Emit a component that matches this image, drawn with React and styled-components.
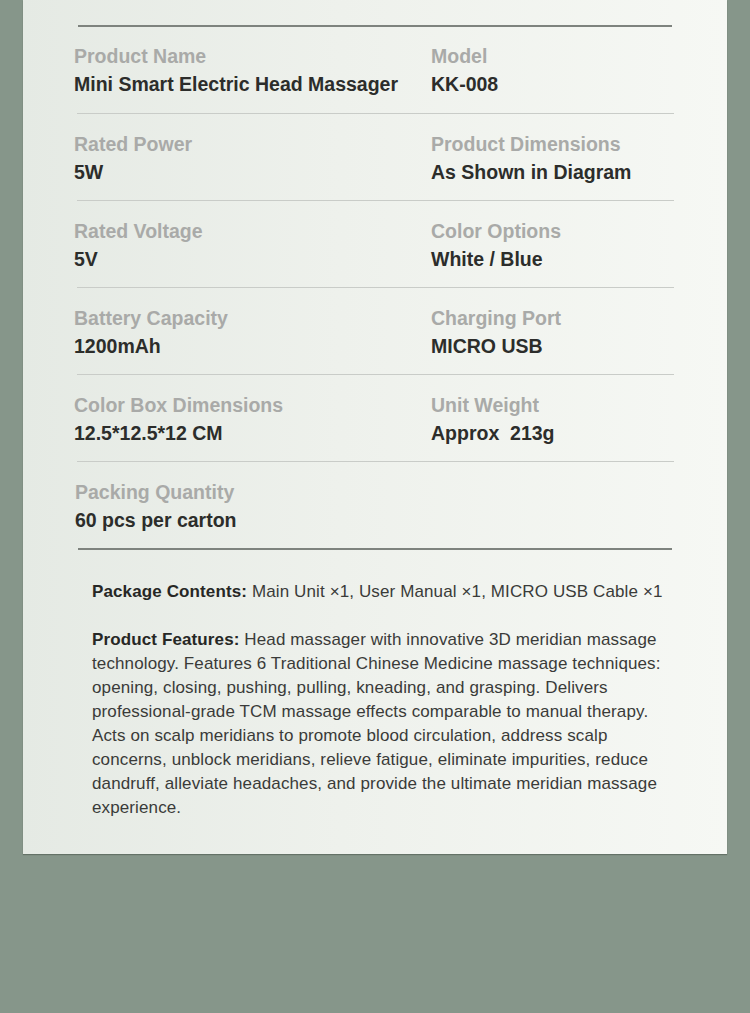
import React from "react";
import styled, { createGlobalStyle } from "styled-components";

const GlobalStyle = createGlobalStyle`
  html, body {
    margin: 0;
    padding: 0;
    background: #86968a;
  }
  body {
    font-family: "Liberation Sans", Arial, sans-serif;
  }
`;

const Page = styled.div`
  width: 750px;
  min-height: 1013px;
  background: #86968a;
`;

const Card = styled.div`
  margin-left: 23px;
  width: 704px;
  padding: 25px 0 34px 0;
  background: linear-gradient(90deg, #e5eae4 0%, #eef1ec 45%, #f6f8f4 100%);
  box-shadow: 0 1px 1px rgba(60, 70, 60, 0.45);
`;

const Specs = styled.div`
  margin-left: 51px;
  width: 600px;
`;

const ThickRule = styled.div`
  height: 2px;
  margin: 0 2px 0 4px;
  background: #7e837e;
`;

const Row = styled.div`
  display: grid;
  grid-template-columns: ${(p) => (p.last ? "356px" : "354px")} 1fr;
  padding: ${(p) => (p.first ? "15px 0 15px" : "16px 0 14px")};
  border-bottom: ${(p) => (p.last ? "none" : "1px solid #c9ccc8")};
  margin-left: ${(p) => (p.last ? "1px" : "3px")};
`;

const Cell = styled.div`
  margin-left: ${(p) => (p.shift ? "-3px" : "0")};
`;

const Label = styled.div`
  font-size: 19.5px;
  line-height: 28px;
  font-weight: 700;
  color: #a9aaa8;
`;

const Value = styled.div`
  font-size: 19.5px;
  line-height: 28px;
  font-weight: 700;
  color: #2c2d2b;
  white-space: pre;
`;

const Notes = styled.div`
  margin: 30px 0 0 69px;
  width: 585px;
`;

const Para = styled.p`
  margin: 0 0 24px 0;
  font-size: 17px;
  line-height: 24px;
  letter-spacing: 0.12px;
  color: #3a3b39;
  &:last-child {
    margin-bottom: 0;
  }
`;

const Strong = styled.span`
  font-weight: 700;
  color: #262725;
`;

const rows = [
  [
    ["Product Name", "Mini Smart Electric Head Massager"],
    ["Model", "KK-008"],
  ],
  [
    ["Rated Power", "5W"],
    ["Product Dimensions", "As Shown in Diagram"],
  ],
  [
    ["Rated Voltage", "5V"],
    ["Color Options", "White / Blue"],
  ],
  [
    ["Battery Capacity", "1200mAh"],
    ["Charging Port", "MICRO USB"],
  ],
  [
    ["Color Box Dimensions", "12.5*12.5*12 CM"],
    ["Unit Weight", "Approx  213g"],
  ],
  [["Packing Quantity", "60 pcs per carton"]],
];

export default function App() {
  return (
    <Page>
      <GlobalStyle />
      <Card>
        <Specs>
          <ThickRule />
          {rows.map((r, i) => {
            const last = i === rows.length - 1;
            return (
              <Row key={i} first={i === 0} last={last}>
                {r.map(([label, value], j) => (
                  <Cell key={label} shift={j === 0 && !last}>
                    <Label>{label}</Label>
                    <Value>{value}</Value>
                  </Cell>
                ))}
              </Row>
            );
          })}
          <ThickRule />
        </Specs>
        <Notes>
          <Para>
            <Strong>Package Contents:</Strong> Main Unit ×1, User Manual ×1,
            MICRO USB Cable ×1
          </Para>
          <Para>
            <Strong>Product Features:</Strong> Head massager with innovative 3D
            meridian massage technology. Features 6 Traditional Chinese Medicine
            massage techniques: opening, closing, pushing, pulling, kneading,
            and grasping. Delivers professional-grade TCM massage effects
            comparable to manual therapy. Acts on scalp meridians to promote
            blood circulation, address scalp concerns, unblock meridians,
            relieve fatigue, eliminate impurities, reduce dandruff, alleviate
            headaches, and provide the ultimate meridian massage experience.
          </Para>
        </Notes>
      </Card>
    </Page>
  );
}
